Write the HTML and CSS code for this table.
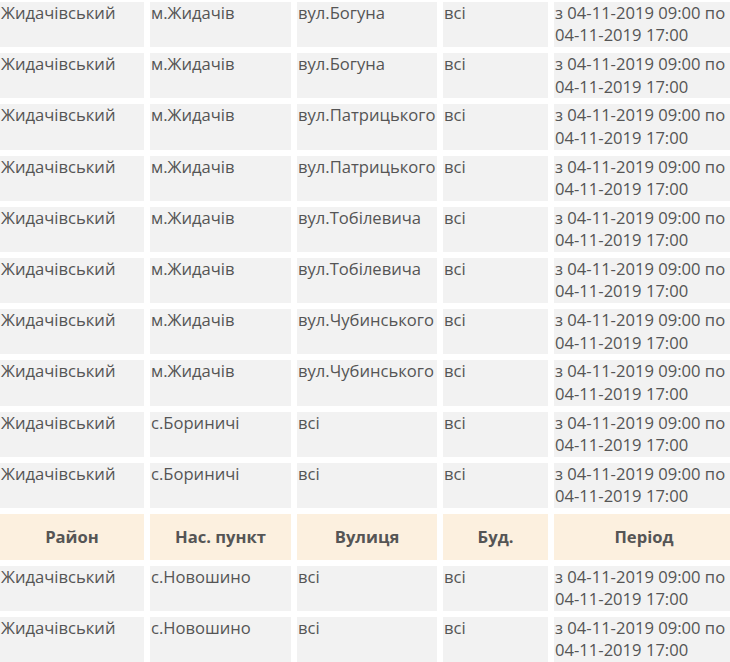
FILE: index.html
```html
<!DOCTYPE html>
<html lang="uk">
<head>
  <meta charset="UTF-8">
  <title>Графік відключень</title>
  <link rel="stylesheet" href="styles.css">
</head>
<body>
  <table class="outages">
    <colgroup>
      <col class="c-district">
      <col class="c-place">
      <col class="c-street">
      <col class="c-house">
      <col class="c-period">
    </colgroup>
    <tbody>
      <tr><td>Жидачівський</td><td>м.Жидачів</td><td>вул.Богуна</td><td>всі</td><td>з 04-11-2019 09:00 по 04-11-2019 17:00</td></tr>
      <tr><td>Жидачівський</td><td>м.Жидачів</td><td>вул.Богуна</td><td>всі</td><td>з 04-11-2019 09:00 по 04-11-2019 17:00</td></tr>
      <tr><td>Жидачівський</td><td>м.Жидачів</td><td>вул.Патрицького</td><td>всі</td><td>з 04-11-2019 09:00 по 04-11-2019 17:00</td></tr>
      <tr><td>Жидачівський</td><td>м.Жидачів</td><td>вул.Патрицького</td><td>всі</td><td>з 04-11-2019 09:00 по 04-11-2019 17:00</td></tr>
      <tr><td>Жидачівський</td><td>м.Жидачів</td><td>вул.Тобілевича</td><td>всі</td><td>з 04-11-2019 09:00 по 04-11-2019 17:00</td></tr>
      <tr><td>Жидачівський</td><td>м.Жидачів</td><td>вул.Тобілевича</td><td>всі</td><td>з 04-11-2019 09:00 по 04-11-2019 17:00</td></tr>
      <tr><td>Жидачівський</td><td>м.Жидачів</td><td>вул.Чубинського</td><td>всі</td><td>з 04-11-2019 09:00 по 04-11-2019 17:00</td></tr>
      <tr><td>Жидачівський</td><td>м.Жидачів</td><td>вул.Чубинського</td><td>всі</td><td>з 04-11-2019 09:00 по 04-11-2019 17:00</td></tr>
      <tr><td>Жидачівський</td><td>с.Бориничі</td><td>всі</td><td>всі</td><td>з 04-11-2019 09:00 по 04-11-2019 17:00</td></tr>
      <tr><td>Жидачівський</td><td>с.Бориничі</td><td>всі</td><td>всі</td><td>з 04-11-2019 09:00 по 04-11-2019 17:00</td></tr>
      <tr class="head-row"><th>Район</th><th>Нас. пункт</th><th>Вулиця</th><th>Буд.</th><th>Період</th></tr>
      <tr><td>Жидачівський</td><td>с.Новошино</td><td>всі</td><td>всі</td><td>з 04-11-2019 09:00 по 04-11-2019 17:00</td></tr>
      <tr><td>Жидачівський</td><td>с.Новошино</td><td>всі</td><td>всі</td><td>з 04-11-2019 09:00 по 04-11-2019 17:00</td></tr>
    </tbody>
  </table>
</body>
</html>
```

FILE: styles.css
```css
html, body { margin: 0; padding: 0; }
body {
  font-family: 'Open Sans', sans-serif;
  font-size: 16.6px;
  color: #555;
  background: #fff;
  overflow: hidden;
}
.outages {
  table-layout: fixed;
  border-collapse: separate;
  border-spacing: 6px 6px;
  margin: -4px 0 0 -6px;
  width: 746px;
}
.c-district { width: 144px; }
.c-place { width: 141px; }
.c-street { width: 140px; }
.c-house { width: 105px; }
.c-period { width: 180px; }
.outages td {
  background: #f2f2f2;
  padding: 0 1px;
  line-height: 22.4px;
  vertical-align: top;
  height: 45.2px;
  box-sizing: border-box;
}
.outages th {
  background: #fcf0df;
  font-weight: 700;
  text-align: center;
  padding: 11.8px 1px;
  line-height: 22.4px;
}
```
